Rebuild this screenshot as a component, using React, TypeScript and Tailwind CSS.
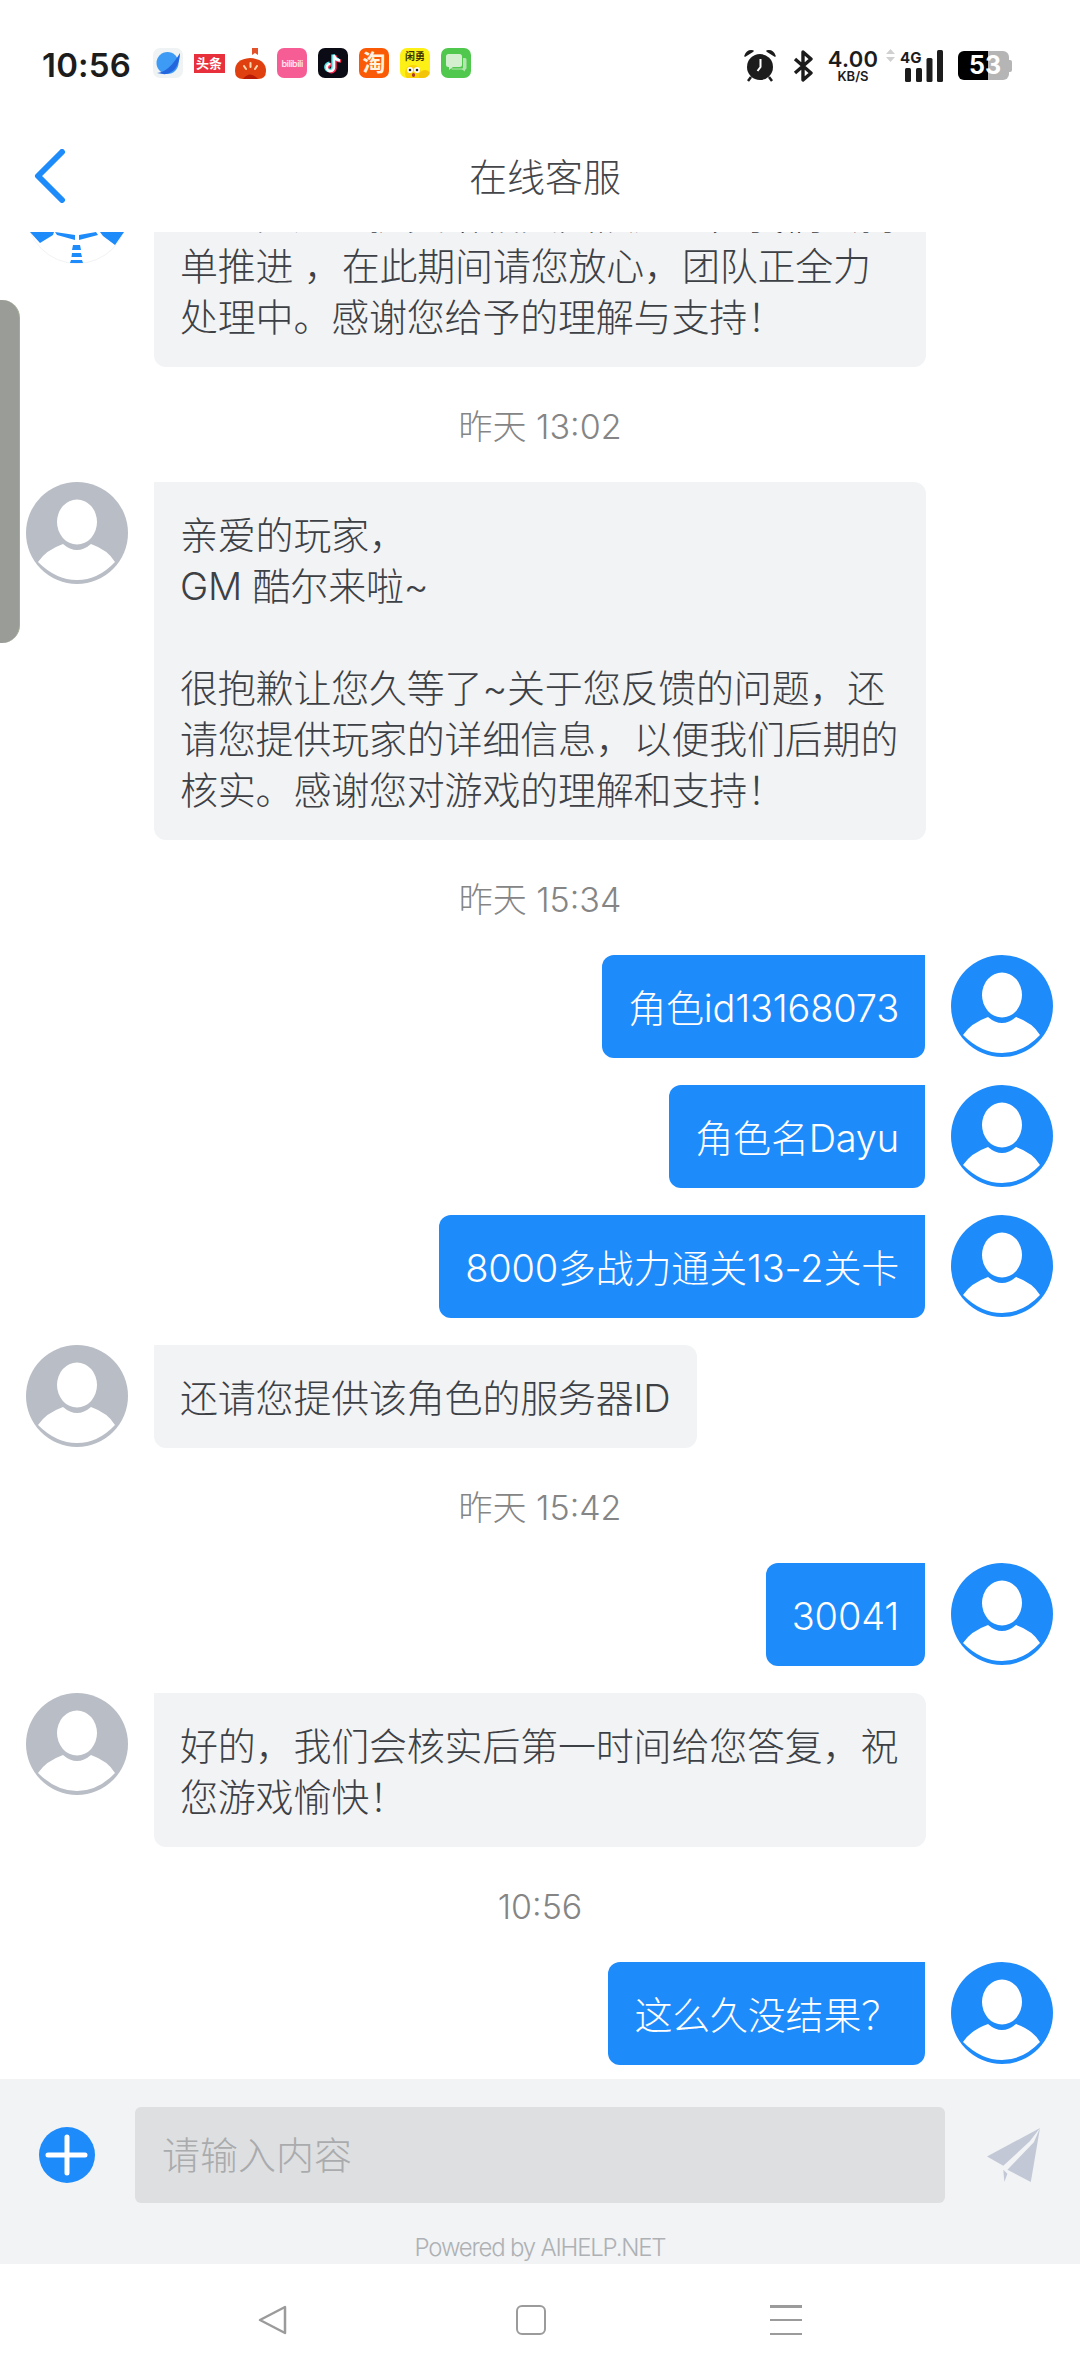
import React from "react";

const BLUE = "#1e8bfb";

// --- STATUS BAR ICONS ---
const AppIcons = () => (
  <div className="ml-[22px] flex items-start gap-[11px]">
    <svg width="30" height="30" viewBox="0 0 30 30">
      <rect width="30" height="30" rx="7" fill="#f0f3f4" />
      <circle cx="14.5" cy="15" r="11" fill="#3d9bf5" />
      <path d="M4 25 Q16 24 27 5 Q27 14 22 21 Q16 27 10 26 Z" fill="#2466dd" />
    </svg>
    <div className="flex h-[30px] w-[30px] items-center justify-center">
      <div className="flex h-[19px] w-[31px] shrink-0 items-center justify-center bg-[#e8303c] text-[13px] leading-none font-bold text-white">头条</div>
    </div>
    <svg width="31" height="31" viewBox="0 0 31 31">
      <path d="M17 0h6v7l-3-2-3 2z" fill="#e2532c" />
      <path d="M0 23 Q0 11 15 10 Q31 11 31 23 Q31 31 23 31 H8 Q0 31 0 23Z" fill="#e0400f" />
      <path d="M8 31 Q15 22 23 31Z" fill="#b81a05" />
      <path d="M15.500 15v4M9 18l2 3M22 18l-2 3" stroke="#ffd9b0" strokeWidth="2" strokeLinecap="round" />
    </svg>
    <div className="flex h-[30px] w-[30px] items-center justify-center rounded-[7px] bg-[#f75d95] text-[9px] leading-none font-semibold tracking-[-0.5px] text-[#ffe3ee]">bilibili</div>
    <svg width="30" height="30" viewBox="0 0 30 30">
      <rect width="30" height="30" rx="7" fill="#0b0b16" />
      <path d="M16 7v12.5a3.6 3.6 0 1 1-3.6-3.6M16 7q1 5 6 5.5" fill="none" stroke="#ff2c55" strokeWidth="3.4" transform="translate(1 .6)" />
      <path d="M16 7v12.5a3.6 3.6 0 1 1-3.6-3.6M16 7q1 5 6 5.5" fill="none" stroke="#50e3e6" strokeWidth="3.4" transform="translate(-1 -.6)" />
      <path d="M16 7v12.5a3.6 3.6 0 1 1-3.6-3.6M16 7q1 5 6 5.5" fill="none" stroke="#fff" strokeWidth="2.4" />
    </svg>
    <div className="flex h-[30px] w-[30px] items-center justify-center rounded-[7px] bg-[#fa5a06] text-[23px] leading-none font-bold text-[#fff3df]">淘</div>
    <div className="relative flex h-[30px] w-[30px] flex-col items-center overflow-hidden rounded-[7px] bg-[#fdf016]">
      <span className="mt-[3px] text-[10px] leading-none font-bold text-[#3a3000]">闲勇</span>
      <svg className="absolute bottom-0 left-0" width="30" height="17" viewBox="0 0 30 17">
        <circle cx="13" cy="12" r="8" fill="#fbd20a" />
        <circle cx="25" cy="15" r="6" fill="#f3c50a" />
        <circle cx="10" cy="9" r="3" fill="#fff" />
        <circle cx="17" cy="9" r="3" fill="#fff" />
        <circle cx="10" cy="9" r="1.3" fill="#222" />
        <circle cx="17" cy="9" r="1.3" fill="#222" />
        <ellipse cx="13.5" cy="14" rx="1.6" ry="2" fill="#a33" />
      </svg>
    </div>
    <svg width="30" height="30" viewBox="0 0 30 30">
      <rect width="30" height="30" rx="7" fill="#50c84e" />
      <rect x="5" y="6" width="16" height="13" rx="2.5" fill="#d3efd0" />
      <path d="M8 18v4l4-3z" fill="#d3efd0" />
      <path d="M22 10h2a1.5 1.5 0 0 1 1.5 1.5V20a1.5 1.5 0 0 1-1.5 1.5v2l-3-2H11l-1-1h11a1 1 0 0 0 1-1z" fill="#b4e5b0" />
    </svg>
  </div>
);

const StatusRight = () => (
  <div className="ml-auto flex items-center pr-[67px] text-[#1c1c1c]">
    <svg width="32" height="33" viewBox="0 0 32 33">
      <circle cx="16" cy="18" r="13" fill="#1c1c1c" />
      <path d="M1 7 Q3 1 9 2Z M31 7 Q29 1 23 2Z" fill="#1c1c1c" stroke="#1c1c1c" strokeWidth="1.5" strokeLinejoin="round" />
      <path d="M7 28l-3 4M25 28l3 4" stroke="#1c1c1c" strokeWidth="2.5" />
      <path d="M16.5 10v8l-3 4" fill="none" stroke="#fff" strokeWidth="2" />
    </svg>
    <svg className="ml-[17px]" width="20" height="32" viewBox="0 0 20 32">
      <path d="M2 9l16 14-8 7V2l8 7L2 23" fill="none" stroke="#1c1c1c" strokeWidth="3.4" strokeLinejoin="round" />
    </svg>
    <div className="ml-[13px] flex w-[54px] flex-col items-center font-['Inter'] leading-none font-semibold">
      <span className="text-[22px] tracking-[0.3px]">4.00</span>
      <span className="text-[13px]">KB/S</span>
    </div>
    <svg className="ml-[6px] -mt-[20px]" width="9" height="13" viewBox="0 0 9 13">
      <path d="M4.5 0L9 5H0zM4.5 13L0 8h9z" fill="#d0d0d0" />
    </svg>
    <div className="relative ml-[5px] h-[32px] w-[43px]">
      <span className="absolute -top-[3px] left-0 font-['Inter'] text-[15px] font-bold">4G</span>
      <svg className="absolute top-0 right-0" width="38" height="32" viewBox="0 0 38 32">
        <rect x="0" y="18" width="6" height="14" rx="1.5" fill="#1c1c1c" />
        <rect x="11" y="18" width="6" height="14" rx="1.5" fill="#1c1c1c" />
        <rect x="21.500" y="8" width="6" height="24" rx="1.5" fill="#1c1c1c" />
        <rect x="32" y="0" width="6" height="32" rx="1.5" fill="#1c1c1c" />
      </svg>
    </div>
    <div className="relative ml-[15px] flex h-[29px] w-[55px] items-center">
      <div className="flex h-full w-[30px] items-center justify-end rounded-l-[6px] bg-black" />
      <div className="h-full w-[21px] rounded-r-[6px] bg-[#b5b5b5]" />
      <div className="h-[12px] w-[3px] rounded-r-[2px] bg-[#b5b5b5]" />
      <span className="absolute left-[11px] font-['Inter'] text-[25px] leading-none font-bold text-white">53</span>
    </div>
  </div>
);

// --- AVATARS ---
const Avatar = ({ color }: { color: string }) => (
  <svg className="shrink-0" width="102" height="102" viewBox="0 0 102 102">
    <circle cx="51" cy="51" r="51" fill={color} />
    <ellipse cx="51" cy="40" rx="20" ry="22.500" fill="#fff" />
    <path d="M12 80 Q20 68 37 62 Q51 74 65 62 Q82 68 89 80 Q72 98 51 98 Q30 98 12 80Z" fill="#fff" />
  </svg>
);

const GmAvatar = () => (
  <svg className="shrink-0" width="102" height="102" viewBox="0 0 102 102">
    <circle cx="51" cy="51" r="50.500" fill="#fff" stroke="#f1f2f4" />
    <path d="M4 70 L14 81 L27 73 L28 70Z M29 70 L49 73 V78 L31 73Z" fill={BLUE} />
    <path d="M53 73 L70 70 L72 73 L53 78Z M74 70 H98 L89 83 L77 74Z" fill={BLUE} />
    <path d="M47 83 H54 L55 88 H46Z M46 91 H55 L56 95 H45.500Z M45 98 H56 L57 101 H44Z" fill={BLUE} />
  </svg>
);

// --- CHAT ---
const TimeRow = ({ label }: { label: string }) => (
  <div className="flex h-[115px] shrink-0 items-center justify-center pt-[5px] text-[34px] leading-none font-light text-[#858585]">{label}</div>
);

const Received = ({ text, wide, gm, first }: { text: string; wide?: boolean; gm?: boolean; first?: boolean }) => (
  <div className={first ? "flex shrink-0 items-start gap-[26px] pl-[26px]" : "mt-[27px] flex shrink-0 items-start gap-[26px] pl-[26px]"}>
    {gm ? <GmAvatar /> : <Avatar color="#b9bdc6" />}
    <div className={`rounded-[12px] rounded-tl-none bg-[#f1f3f5] px-[26px] pt-[28px] pb-[24px] text-[38px] leading-[51px] font-light tracking-[-0.2px] whitespace-pre text-[#3d4044] ${wide ? "w-[772px]" : ""}`}>{text}</div>
  </div>
);

const Sent = ({ text, first }: { text: string; first?: boolean }) => (
  <div className={first ? "flex shrink-0 items-start justify-end gap-[26px] pr-[27px]" : "mt-[27px] flex shrink-0 items-start justify-end gap-[26px] pr-[27px]"}>
    <div className="rounded-[12px] rounded-tr-none bg-[#1e8bfb] px-[26px] pt-[28px] pb-[24px] text-[38px] leading-[51px] font-light tracking-[-0.2px] text-white">{text}</div>
    <Avatar color={BLUE} />
  </div>
);

const Composer = () => (
  <div className="flex h-[185px] shrink-0 flex-col bg-[#f1f3f5]">
    <div className="mt-[28px] flex items-center pl-[39px]">
      <svg width="56" height="56" viewBox="0 0 56 56">
        <circle cx="28" cy="28" r="28" fill={BLUE} />
        <path d="M28 10v36M9 28h37" stroke="#fff" strokeWidth="5" strokeLinecap="round" />
      </svg>
      <div className="ml-[40px] flex h-[96px] w-[810px] items-center rounded-[6px] bg-[#dedfe1] pl-[27px] text-[38px] font-light text-[#a9abad]">请输入内容</div>
      <svg className="ml-[42px]" width="53" height="54" viewBox="27 19 52 53">
        <path d="M79 19L27 47l16 9 26-24zM79 19l-9 53-23-12 26-27zM43 60l1 12 3-8z" fill="#c3c8d6" />
      </svg>
    </div>
    <div className="mt-[30px] text-center text-[24px] leading-[30px] font-light tracking-[-1.200px] text-[#aeb1b4]">Powered by AIHELP.NET</div>
  </div>
);

const NavBar = () => (
  <div className="flex h-[112px] shrink-0 items-start bg-white pt-[41px] pl-[257px]">
    <svg width="30" height="30" viewBox="0 0 30 30">
      <path d="M28 2v26L3 15z" fill="none" stroke="#9b9b9b" strokeWidth="2.500" strokeLinejoin="round" />
    </svg>
    <div className="ml-[229px] h-[30px] w-[30px] rounded-[6px] border-[2.5px] border-[#9b9b9b]" />
    <div className="ml-[224px] flex h-[30px] w-[32px] flex-col justify-between">
      <div className="h-[2.5px] bg-[#9b9b9b]" />
      <div className="h-[2.5px] bg-[#9b9b9b]" />
      <div className="h-[2.5px] bg-[#9b9b9b]" />
    </div>
  </div>
);

export default function App() {
  return (
    <div className="relative flex h-[2376px] w-[1080px] flex-col overflow-hidden bg-white font-['Inter','Noto_Sans_CJK_SC',sans-serif]">
      {/* status bar */}
      <div className="flex h-[125px] shrink-0 items-start pt-[48px] pl-[42px]">
        <span className="text-[33px] leading-[34px] font-semibold tracking-[0.2px] text-[#1c1c1c]">10:56</span>
        <AppIcons />
        <StatusRight />
      </div>

      {/* header */}
      <div className="relative z-10 flex h-[107px] shrink-0 items-center justify-center bg-white pb-[3px] pl-[10px] text-[38px] font-light text-[#444649]">
        <svg className="absolute top-[24px] left-[34px]" width="32" height="54" viewBox="0 0 32 54">
          <path d="M28 3L4 27l24 24" fill="none" stroke={BLUE} strokeWidth="6" strokeLinecap="round" strokeLinejoin="round" />
        </svg>
        在线客服
      </div>

      {/* messages, pinned to the bottom and clipped at the top */}
      <div className="flex min-h-0 flex-1 flex-col justify-end overflow-hidden pb-[14px]">
        <Received first gm wide text={"您的问题已提交给相关团队处理，我们会持\n单推进 ，在此期间请您放心，团队正全力\n处理中。感谢您给予的理解与支持！"} />
        <TimeRow label="昨天 13:02" />
        <Received first wide text={"亲爱的玩家，\nGM 酷尔来啦~\n\n很抱歉让您久等了~关于您反馈的问题，还\n请您提供玩家的详细信息，以便我们后期的\n核实。感谢您对游戏的理解和支持！"} />
        <TimeRow label="昨天 15:34" />
        <Sent first text="角色id13168073" />
        <Sent text="角色名Dayu" />
        <Sent text="8000多战力通关13-2关卡" />
        <Received text="还请您提供该角色的服务器ID" />
        <TimeRow label="昨天 15:42" />
        <Sent first text="30041" />
        <Received wide text={"好的，我们会核实后第一时间给您答复，祝\n您游戏愉快！"} />
        <TimeRow label="10:56" />
        <Sent first text="这么久没结果？" />
      </div>

      <Composer />
      <NavBar />

      {/* floating side handle */}
      <div className="absolute top-[300px] left-0 h-[343px] w-[20px] rounded-r-[18px] border-r-[1px] border-[#a3ad96] bg-[#9a9c98]" />
    </div>
  );
}
